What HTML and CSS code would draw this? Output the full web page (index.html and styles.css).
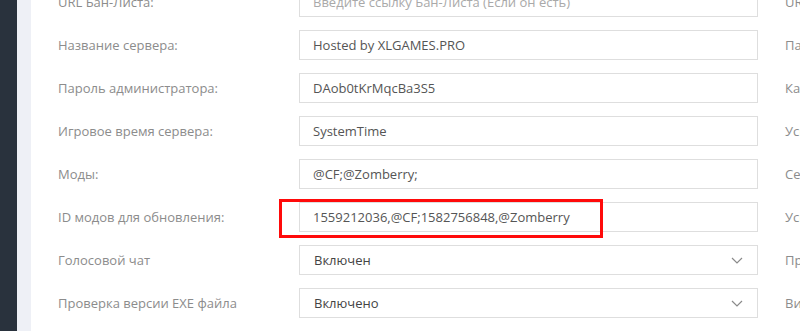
FILE: index.html
```html
<!DOCTYPE html>
<html lang="ru">
<head>
<meta charset="utf-8">
<link rel="stylesheet" href="styles.css">
</head>
<body>
<div class="layout">
  <aside class="sidebar"></aside>
  <div class="strip"></div>
  <main class="content">
    <div class="form">
      <div class="row">
        <label class="label">URL Бан-Листа:</label>
        <div class="field"><input class="input" type="text" placeholder="Введите ссылку Бан-Листа (Если он есть)"></div>
        <span class="label side">URL Бан-Листа:</span>
      </div>
      <div class="row">
        <label class="label">Название сервера:</label>
        <div class="field"><input class="input" type="text" value="Hosted by XLGAMES.PRO"></div>
        <span class="label side">Пароль сервера:</span>
      </div>
      <div class="row">
        <label class="label">Пароль администратора:</label>
        <div class="field"><input class="input" type="text" value="DAob0tKrMqcBa3S5"></div>
        <span class="label side">Качество:</span>
      </div>
      <div class="row">
        <label class="label">Игровое время сервера:</label>
        <div class="field"><input class="input" type="text" value="SystemTime"></div>
        <span class="label side">Ускорение:</span>
      </div>
      <div class="row">
        <label class="label">Моды:</label>
        <div class="field"><input class="input" type="text" value="@CF;@Zomberry;"></div>
        <span class="label side">Серверные моды:</span>
      </div>
      <div class="row">
        <label class="label">ID модов для обновления:</label>
        <div class="field">
          <input class="input" type="text" value="1559212036,@CF;1582756848,@Zomberry">
          <span class="highlight"></span>
        </div>
        <span class="label side">Ускорение ночи:</span>
      </div>
      <div class="row">
        <label class="label">Голосовой чат</label>
        <div class="field select">
          <span class="select-text">Включен</span>
          <svg class="chevron" width="12" height="7" viewBox="0 0 12 7"><path d="M1 1 L6 6 L11 1" fill="none" stroke="#8a8a8a" stroke-width="1.2"/></svg>
        </div>
        <span class="label side">Прямой эфир</span>
      </div>
      <div class="row">
        <label class="label">Проверка версии EXE файла</label>
        <div class="field select">
          <span class="select-text">Включено</span>
          <svg class="chevron" width="12" height="7" viewBox="0 0 12 7"><path d="M1 1 L6 6 L11 1" fill="none" stroke="#8a8a8a" stroke-width="1.2"/></svg>
        </div>
        <span class="label side">Вид от третьего лица</span>
      </div>
    </div>
  </main>
</div>
</body>
</html>
```

FILE: styles.css
```css
* { box-sizing: border-box; }
html, body {
  margin: 0;
  padding: 0;
  height: 100%;
  overflow: hidden;
  background: #ffffff;
}
body {
  font-family: "Open Sans", "Noto Sans", sans-serif;
  font-size: 13px;
}
.layout {
  display: flex;
  height: 100%;
}
.sidebar {
  flex: 0 0 17px;
  background: #29323d;
}
.strip {
  flex: 0 0 14px;
  background: #eef0f6;
}
.content {
  flex: 1 1 auto;
  background: #ffffff;
  padding-left: 27px;
  overflow: hidden;
}
.form {
  margin-top: -13px;
  display: flex;
  flex-direction: column;
  gap: 13px;
}
.row {
  display: grid;
  grid-template-columns: 214px 459px max-content;
  column-gap: 27px;
  align-items: center;
  height: 30px;
  white-space: nowrap;
}
.label {
  color: #8c8c8c;
  font-size: 13px;
}
.field {
  position: relative;
  height: 30px;
}
.input {
  width: 100%;
  height: 30px;
  border: 1px solid #dedede;
  border-radius: 0;
  padding: 0 13px;
  font-family: "Open Sans", "Noto Sans", sans-serif;
  font-size: 13px;
  color: #555555;
  background: #ffffff;
  outline: none;
}
.input::placeholder {
  color: #a9a9a9;
}
.select {
  display: flex;
  align-items: center;
  justify-content: space-between;
  border: 1px solid #dedede;
  padding: 0 14px 0 14px;
  color: #444444;
}
.select-text {
  font-size: 13px;
}
.chevron {
  display: block;
}
.highlight {
  position: absolute;
  left: -20px;
  top: -3px;
  width: 324px;
  height: 39px;
  border: 3px solid #ff0a0a;
  pointer-events: none;
}
```
